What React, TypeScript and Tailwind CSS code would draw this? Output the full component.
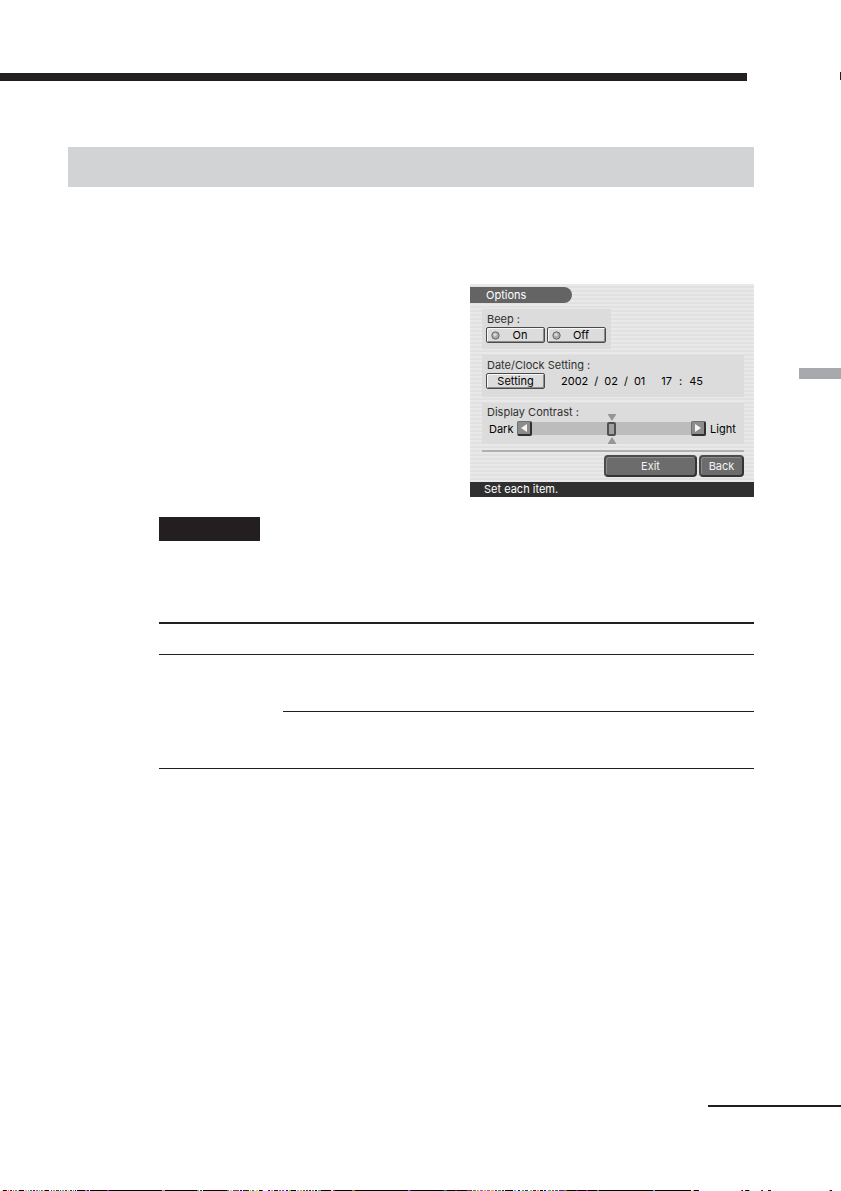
import { useState } from "react";
import type { ReactNode } from "react";

const bevel =
  "h-4 border border-[#4a4a4a] bg-[#dcdcdc] shadow-[inset_1px_1px_0_#f8f8f8,inset_-1px_-1px_0_#8c8c8c] rounded-xs text-black flex items-center";

const EDGE_SPECKS: [number, number, string][] = [
  [2, 1, "#ffee00"], [3, 3, "#000"], [6, 1, "#c00"], [8, 1, "#f60"], [10, 2, "#a00"], [13, 1, "#e44"], [15, 2, "#28c"],
  [18, 1, "#fa4"], [19, 5, "#000"], [25, 2, "#f9a"], [28, 1, "#0cc"], [30, 2, "#084"], [33, 2, "#606"], [36, 2, "#0a6"],
  [39, 1, "#c6c"], [41, 2, "#0a4"], [44, 1, "#f40"], [45, 4, "#000"], [51, 1, "#04f"], [53, 2, "#c80"], [56, 3, "#063"],
  [60, 1, "#a0f"], [62, 2, "#0c6"], [65, 2, "#440"], [68, 1, "#fa0"], [70, 2, "#04a"], [73, 1, "#0c0"], [75, 1, "#008"],
  [77, 8, "#000"], [85, 2, "#88f"], [87, 2, "#408"], [90, 17, "#000"], [107, 2, "#a0f"], [109, 53, "#000"],
  [162, 1, "#fa4"], [163, 2, "#88f"], [165, 32, "#000"], [197, 2, "#0c4"], [200, 2, "#048"], [203, 24, "#100"],
  [227, 2, "#08a"], [230, 2, "#cc8"], [233, 6, "#646"], [240, 2, "#00f"], [243, 6, "#222"], [250, 1, "#0f0"],
  [252, 2, "#084"], [256, 2, "#8f0"], [259, 3, "#000"], [262, 1, "#c0f"], [268, 2, "#00f"], [271, 2, "#f80"],
  [274, 4, "#306"], [279, 2, "#0a0"], [282, 2, "#c0f"], [286, 2, "#00f"], [289, 2, "#0f0"], [291, 5, "#000"],
  [297, 2, "#4cc"], [300, 2, "#f80"], [303, 2, "#084"], [306, 2, "#048"], [309, 2, "#800"], [312, 2, "#0a4"],
  [315, 2, "#000"], [318, 3, "#0c8"], [321, 10, "#000"], [331, 1, "#fd8"], [333, 2, "#646"], [335, 17, "#000"],
  [352, 1, "#0c4"], [353, 2, "#f40"], [355, 53, "#000"], [408, 1, "#a8f"], [409, 2, "#04f"], [411, 31, "#000"],
  [442, 2, "#00c"], [444, 3, "#084"], [447, 8, "#000"], [455, 2, "#048"], [457, 10, "#200"], [467, 2, "#06c"],
  [469, 3, "#a20"], [473, 3, "#0a4"], [477, 2, "#f80"], [480, 3, "#c4c"], [484, 2, "#8c4"], [487, 3, "#c48"],
  [491, 3, "#fa0"], [495, 2, "#80f"], [498, 3, "#0a4"], [502, 2, "#044"], [505, 8, "#000"], [514, 2, "#0cf"],
  [518, 2, "#00f"], [522, 2, "#0c0"], [525, 3, "#048"], [530, 2, "#0f0"], [533, 3, "#606"], [537, 2, "#c80"],
  [540, 3, "#000"], [544, 2, "#00f"], [548, 3, "#0c4"], [552, 2, "#f08"], [555, 3, "#084"], [559, 3, "#808"],
  [562, 2, "#04f"], [564, 3, "#480"], [567, 9, "#000"], [576, 2, "#808"], [578, 8, "#000"], [586, 2, "#a0c"],
  [588, 9, "#000"], [597, 2, "#0a8"], [599, 54, "#000"], [653, 2, "#4af"], [655, 36, "#000"],
  [693, 1, "#f80"], [694, 4, "#000"], [698, 1, "#00f"],
  [741, 1, "#f40"], [742, 1, "#00f"], [745, 1, "#c00"], [746, 3, "#000"], [749, 1, "#0ff"], [761, 1, "#f00"],
  [762, 1, "#00f"], [768, 2, "#400"], [770, 1, "#00f"], [829, 1, "#f80"], [830, 2, "#006"],
];

function Panel({ children, className }: { children: ReactNode; className: string }) {
  return <section className={`bg-[#dcdcdc] px-1 ${className}`}>{children}</section>;
}

function Lamp() {
  return (
    <svg viewBox="0 0 9 9" className="size-[9px]" aria-hidden="true">
      <circle cx="4.5" cy="4.5" r="3.7" fill="#a8a8a8" stroke="#686868" />
      <circle cx="4" cy="3.8" r="1.7" fill="#d8d8d8" />
    </svg>
  );
}

function BeepButton({ label, pressed, onClick }: { label: string; pressed: boolean; onClick: () => void }) {
  return (
    <button type="button" aria-pressed={pressed} onClick={onClick} className={`${bevel} w-[59px] pl-1`}>
      <Lamp />
      <span className="flex-1 pr-1 text-center">{label}</span>
    </button>
  );
}

function StepButton({ label, d, onClick }: { label: string; d: string; onClick: () => void }) {
  return (
    <button
      type="button"
      aria-label={label}
      onClick={onClick}
      className="flex size-[15px] shrink-0 items-center justify-center rounded-xs border border-r-2 border-b-2 border-[#707070] border-r-[#303030] border-b-[#303030] bg-[#8c8c8c]"
    >
      <svg viewBox="0 0 8 8" className="size-2" aria-hidden="true">
        <path d={d} fill="#f4f4f4" />
      </svg>
    </button>
  );
}

function OptionsScreen() {
  const [beep, setBeep] = useState(true);
  const [contrast, setContrast] = useState(50);
  const actionClass =
    "h-[22px] rounded-sm border-2 border-[#343434] border-t-[#4c4c4c] border-l-[#4c4c4c] bg-[#6c6c6c] text-[#f4f4f4] shadow-[inset_1px_1px_0_#8c8c8c]";
  return (
    <main className="w-[284px] bg-[repeating-linear-gradient(#e9e9e9_0_2px,#e1e1e1_2px_4px)] pt-[3px] font-[Inter,sans-serif] text-[11px] leading-[14px] text-[#303030]">
      <h1 className="flex h-4 w-[102px] items-center rounded-r-full bg-[#646464] pl-4 text-white">Options</h1>

      <div className="flex flex-col items-start pt-[6px] pr-[10px] pl-3">
        <Panel className="h-10 w-[129px] pt-[3px]">
          <h2 className="pl-px">Beep :</h2>
          <div className="flex gap-[2px] pt-px">
            <BeepButton label="On" pressed={beep} onClick={() => setBeep(true)} />
            <BeepButton label="Off" pressed={!beep} onClick={() => setBeep(false)} />
          </div>
        </Panel>

        <Panel className="mt-[6px] h-[42px] w-full pt-[3px]">
          <h2 className="pl-px">Date/Clock Setting :</h2>
          <div className="flex items-center pt-px text-black">
            <button type="button" className={`${bevel} w-[59px] justify-center`}>
              Setting
            </button>
            <time dateTime="2002-02-01T17:45" className="flex gap-4 pl-4">
              <span className="flex gap-[6px]">
                <span>2002</span>
                <span>/</span>
                <span>02</span>
                <span>/</span>
                <span>01</span>
              </span>
              <span className="flex gap-[7px]">
                <span>17</span>
                <span>:</span>
                <span>45</span>
              </span>
            </time>
          </div>
        </Panel>

        <Panel className="mt-[6px] h-[41px] w-full pt-[2px]">
          <label htmlFor="contrast" className="block pl-px">
            Display Contrast :
          </label>
          <div className="flex items-center pt-[2px] text-black">
            <span className="w-[31px] pl-[3px]">Dark</span>
            <StepButton label="Darker" d="M7 0v8L1 4z" onClick={() => setContrast(Math.max(0, contrast - 5))} />
            <div className="relative flex flex-1">
              <input
                id="contrast"
                type="range"
                min="0"
                max="100"
                value={contrast}
                onChange={(e) => setContrast(Number(e.target.value))}
                className="h-[13px] w-full appearance-none bg-[#bcbcbc] [&::-webkit-slider-thumb]:h-[14px] [&::-webkit-slider-thumb]:w-[9px] [&::-webkit-slider-thumb]:appearance-none [&::-webkit-slider-thumb]:rounded-xs [&::-webkit-slider-thumb]:border-2 [&::-webkit-slider-thumb]:border-[#505050] [&::-webkit-slider-thumb]:bg-[#a0a0a0]"
              />
              <svg
                viewBox="0 0 9 30"
                className="pointer-events-none absolute -top-2 left-1/2 h-[30px] w-[9px] -translate-x-1/2"
                aria-hidden="true"
              >
                <path d="M0 0h9L4.5 7zM0 30h9L4.5 23z" fill="#969696" />
              </svg>
            </div>
            <StepButton label="Lighter" d="M1 0v8L7 4z" onClick={() => setContrast(Math.min(100, contrast + 5))} />
            <span className="w-[34px] pl-1">Light</span>
          </div>
        </Panel>

        <hr className="mt-[6px] w-full border-t-2 border-[#b0b0b0]" />
        <div className="flex w-full justify-end gap-[2px] pt-[3px] pb-[5px]">
          <button type="button" className={`${actionClass} w-[93px]`}>Exit</button>
          <button type="button" className={`${actionClass} w-[45px]`}>Back</button>
        </div>
      </div>

      <p className="h-[15px] bg-[#303030] pl-[14px] text-white">Set each item.</p>
    </main>
  );
}

export default function App() {
  return (
    <div className="flex min-h-screen flex-col bg-white">
      <header className="flex items-start justify-between pt-[72px]">
        <div className="mt-px mr-[93px] h-2 flex-1 bg-[#231f20]" />
        <div className="h-2 w-px bg-[#231f20]" />
      </header>

      <div className="mt-[66px] mr-[87px] ml-[68px] h-10 bg-[#d1d3d4]" />

      <div className="flex items-start justify-end pt-[97px]">
        <OptionsScreen />
        <div className="mt-[84px] ml-[45px] h-[11px] w-[42px] bg-[#a7a9ac]" />
      </div>

      <div className="mt-5 ml-[159px] h-6 w-[101px] bg-[#231f20]" />

      <div className="mt-[81px] mr-[87px] ml-[159px] border-t-2 border-b border-[#231f20]">
        <div className="h-[30px]" />
        <div className="h-[57px] border-t border-[#231f20]" />
        <div className="ml-[124px] h-[57px] border-t border-[#231f20]" />
      </div>

      <footer className="mt-auto">
        <div className="ml-auto h-[2px] w-[133px] bg-[#231f20]" />
        <svg viewBox="0 0 841 1" preserveAspectRatio="none" shapeRendering="crispEdges" className="mt-[83px] block h-px w-full" aria-hidden="true">
          {EDGE_SPECKS.map(([x, w, fill]) => (
            <rect key={x} x={x} y="0" width={w} height="1" fill={fill} />
          ))}
        </svg>
      </footer>
    </div>
  );
}
